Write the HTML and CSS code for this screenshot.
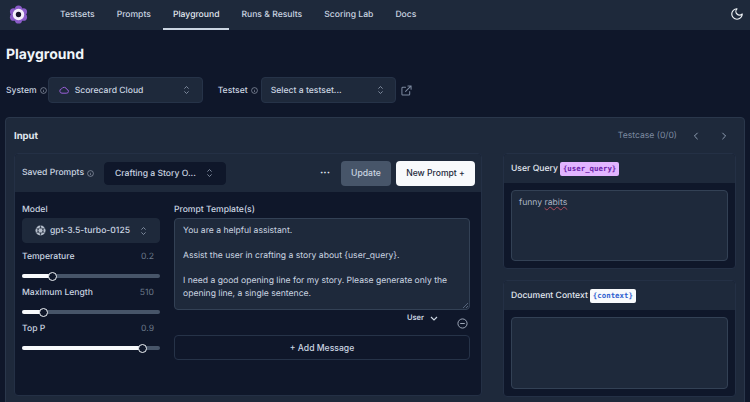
FILE: index.html
```html
<!DOCTYPE html>
<html lang="en">
<head>
  <meta charset="UTF-8" />
  <title>Playground</title>
  <link rel="stylesheet" href="styles.css">
</head>
<body>
  <nav class="topnav">
    <svg class="logo" width="19" height="19" viewBox="0 0 20 20">
      <g fill="#8b5cc9">
        <circle cx="10" cy="4.2" r="3.8"/>
        <circle cx="15.2" cy="7.2" r="3.8"/>
        <circle cx="15.2" cy="12.8" r="3.8"/>
        <circle cx="10" cy="15.8" r="3.8"/>
        <circle cx="4.8" cy="12.8" r="3.8"/>
        <circle cx="4.8" cy="7.2" r="3.8"/>
      </g>
      <circle cx="10" cy="10" r="6" fill="#f4eefb"/>
      <circle cx="10" cy="10" r="2.8" fill="#17132b"/>
    </svg>
    <a class="nav-link">Testsets</a>
    <a class="nav-link">Prompts</a>
    <a class="nav-link active">Playground</a>
    <a class="nav-link">Runs &amp; Results</a>
    <a class="nav-link">Scoring Lab</a>
    <a class="nav-link">Docs</a>
    <svg class="moon" width="14" height="14" viewBox="0 0 24 24" fill="none" stroke="#f1f5f9" stroke-width="2" stroke-linecap="round" stroke-linejoin="round">
      <path d="M12 3a6 6 0 0 0 9 9 9 9 0 1 1-9-9Z"/>
    </svg>
  </nav>

  <h1>Playground</h1>

  <div class="selectors">
    <span class="label">System</span>
    <svg class="info" viewBox="0 0 12 12"><circle cx="6" cy="6" r="5"/><path d="M6 5.5v3M6 3.4v.4"/></svg>
    <div class="select system-select">
      <svg class="cloud" width="10" height="8" viewBox="0 0 24 20" fill="none" stroke="#9a5fd8" stroke-width="2.5" stroke-linejoin="round">
        <path d="M17.5 18H7a5.5 5.5 0 0 1-1-10.9A7 7 0 0 1 19 8.5a4.8 4.8 0 0 1-1.5 9.5Z"/>
      </svg>
      <span class="select-text">Scorecard Cloud</span>
      <svg class="updown" viewBox="0 0 10 14"><path d="M2 5l3-3 3 3M2 9l3 3 3-3"/></svg>
    </div>
    <span class="label testset-label">Testset</span>
    <svg class="info" viewBox="0 0 12 12"><circle cx="6" cy="6" r="5"/><path d="M6 5.5v3M6 3.4v.4"/></svg>
    <div class="select testset-select">
      <span class="select-text">Select a testset...</span>
      <svg class="updown" viewBox="0 0 10 14"><path d="M2 5l3-3 3 3M2 9l3 3 3-3"/></svg>
    </div>
    <svg class="external" width="11" height="11" viewBox="0 0 24 24" fill="none" stroke="#7d8aa0" stroke-width="2.2" stroke-linecap="round" stroke-linejoin="round">
      <path d="M19 14v6a2 2 0 0 1-2 2H4a2 2 0 0 1-2-2V7a2 2 0 0 1 2-2h6M15 2h7v7M10 14L22 2"/>
    </svg>
  </div>

  <section class="panel">
    <div class="panel-head">
      <h2>Input</h2>
      <div class="testcase">
        <span>Testcase (0/0)</span>
        <svg class="pager first" viewBox="0 0 10 12"><path d="M7 2L3 6l4 4"/></svg>
        <svg class="pager" viewBox="0 0 10 12"><path d="M3 2l4 4-4 4"/></svg>
      </div>
    </div>

    <div class="panel-grid">
      <div class="card prompt-card">
        <div class="card-head prompt-head">
          <span class="label">Saved Prompts</span>
          <svg class="info" viewBox="0 0 12 12"><circle cx="6" cy="6" r="5"/><path d="M6 5.5v3M6 3.4v.4"/></svg>
          <div class="select saved-select">
            <span class="select-text">Crafting a Story O...</span>
            <svg class="updown" viewBox="0 0 10 14"><path d="M2 5l3-3 3 3M2 9l3 3 3-3"/></svg>
          </div>
          <span class="dots">&middot;&middot;&middot;</span>
          <button class="btn btn-update">Update</button>
          <button class="btn btn-new">New Prompt +</button>
        </div>

        <div class="prompt-body">
          <div class="settings">
            <div class="label field-label">Model</div>
            <div class="select model-select">
              <svg class="openai" width="11" height="11" viewBox="0 0 24 24" fill="#b4bdca">
                <circle cx="12" cy="12" r="11"/>
                <g fill="none" stroke="#1e293b" stroke-width="1.5">
                  <path d="M12 5.5l5.6 3.25v6.5L12 18.5l-5.6-3.25v-6.5z"/>
                  <path d="M12 1v7M21.5 6.5l-6 3.5M21.5 17.5l-6-3.5M12 23v-7M2.5 17.5l6-3.5M2.5 6.5l6 3.5"/>
                </g>
              </svg>
              <span class="select-text">gpt-3.5-turbo-0125</span>
              <svg class="updown" viewBox="0 0 10 14"><path d="M2 5l3-3 3 3M2 9l3 3 3-3"/></svg>
            </div>

            <div class="slider-row first-row"><span class="label">Temperature</span><span class="value">0.2</span></div>
            <div class="slider"><div class="fill" style="width: 30px"></div><div class="thumb"></div></div>

            <div class="slider-row"><span class="label">Maximum Length</span><span class="value">510</span></div>
            <div class="slider"><div class="fill" style="width: 21px"></div><div class="thumb"></div></div>

            <div class="slider-row"><span class="label">Top P</span><span class="value">0.9</span></div>
            <div class="slider"><div class="fill" style="width: 120px"></div><div class="thumb"></div></div>
          </div>

          <div class="template">
            <div class="label field-label">Prompt Template(s)</div>
            <div class="textbox template-box">
              <p>You are a helpful assistant.</p>
              <p>Assist the user in crafting a story about {user_query}.</p>
              <p>I need a good opening line for my story. Please generate only the opening line, a single sentence.</p>
              <svg class="grip" width="6" height="6" viewBox="0 0 6 6"><path d="M1 6l5-5M4 6l2-2"/></svg>
            </div>
            <div class="role-row">
              <span class="role">User</span>
              <svg class="chevron" width="8" height="6" viewBox="0 0 8 6"><path d="M1 1l3 3 3-3"/></svg>
              <svg class="minus" width="11" height="11" viewBox="0 0 12 12"><circle cx="6" cy="6" r="5"/><path d="M3.5 6h5"/></svg>
            </div>
            <button class="add-message">+ Add Message</button>
          </div>
        </div>
      </div>

      <div class="side">
        <div class="card">
          <div class="card-head side-head">
            <span class="side-title">User Query</span>
            <span class="tag tag-purple">{user_query}</span>
          </div>
          <div class="side-body">
            <div class="textbox side-box first-box">funny <span class="misspelled">rabits</span></div>
          </div>
        </div>
        <div class="card">
          <div class="card-head side-head">
            <span class="side-title">Document Context</span>
            <span class="tag tag-white">{context}</span>
          </div>
          <div class="side-body">
            <div class="textbox side-box"></div>
          </div>
        </div>
      </div>
    </div>
  </section>
</body>
</html>
```

FILE: styles.css
```css
html, body {
  height: 402px;
  overflow: hidden;
}

body {
  font-family: Inter, "Noto Sans", sans-serif;
  font-size: 8.6px;
  text-rendering: geometricPrecision;
  background-color: #0f172a;
  color: #cbd5e1;
  margin: 0;
}

.topnav {
  display: flex;
  align-items: center;
  gap: 2px;
  height: 30px;
  background-color: #1e293b;
  padding-left: 9px;
}

.logo {
  margin: 0 20px 2px 0;
  flex: none;
}

.nav-link {
  display: flex;
  align-items: center;
  height: 30px;
  box-sizing: border-box;
  padding: 1px 10px 0;
  font-size: 8.6px;
  font-weight: 500;
  color: #cbd5e1;
  border-bottom: 2px solid transparent;
}

.nav-link.active {
  color: #e2e8f0;
  border-bottom-color: #cbd5e1;
}

.moon {
  margin: 0 6px 2px auto;
}

h1 {
  font-size: 14px;
  font-weight: 700;
  color: #f1f5f9;
  margin: 15px 0 0 6px;
  line-height: 19px;
}

.selectors {
  display: flex;
  align-items: center;
  margin: 13px 0 0 6px;
  height: 26px;
}

.selectors .label {
  padding-top: 1px;
}

.label {
  color: #cbd5e1;
  font-size: 8.6px;
  font-weight: 500;
}

.info {
  width: 7px;
  height: 7px;
  margin-left: 3px;
  flex: none;
  fill: none;
  stroke: #aab4c4;
  stroke-width: 1;
}

.select {
  display: flex;
  align-items: center;
  box-sizing: border-box;
  background-color: #1e293b;
  border: 1px solid #263348;
  border-radius: 4px;
  height: 26px;
  color: #cbd5e1;
  font-weight: 500;
}

.select-text {
  flex: 1;
  white-space: nowrap;
  padding-top: 1px;
}

.updown {
  width: 7px;
  height: 10px;
  flex: none;
  fill: none;
  stroke: #8f9bae;
  stroke-width: 1.2;
}

.system-select {
  width: 155px;
  margin-left: 1px;
  padding: 0 12px 0 10px;
}

.cloud {
  margin-right: 6px;
}

.testset-label {
  margin-left: 15px;
}

.testset-select {
  width: 135px;
  margin-left: 3px;
  padding: 0 11px 0 9px;
}

.external {
  margin-left: 5px;
}

.panel {
  margin: 14px 5px 0 5px;
  height: 320px;
  box-sizing: border-box;
  background-color: #1e293b;
  border: 1px solid #2a374b;
  border-radius: 4px;
  padding: 0 8px;
}

.panel-head {
  display: flex;
  align-items: center;
  justify-content: space-between;
  height: 35px;
}

h2 {
  font-size: 9.5px;
  font-weight: 700;
  color: #e2e8f0;
  margin: 2px 0 0;
}

.testcase {
  display: flex;
  align-items: center;
  color: #7d8aa0;
  font-size: 8.6px;
  margin-right: 8px;
}

.pager {
  width: 8px;
  height: 10px;
  margin-left: 20px;
  fill: none;
  stroke: #94a3b8;
  stroke-width: 1.2;
}

.pager.first {
  margin-left: 15px;
}

.panel-grid {
  display: grid;
  grid-template-columns: 468px 233px;
  gap: 21px;
}

.card {
  display: flex;
  flex-direction: column;
  background-color: #0f172a;
  border: 1px solid #243045;
  border-radius: 4px;
  box-sizing: border-box;
  overflow: hidden;
}

.card-head {
  display: flex;
  align-items: center;
  background-color: #1e293b;
  box-sizing: border-box;
}

.prompt-card {
  height: 243px;
}

.prompt-head {
  height: 38px;
  padding: 0 6px 0 7px;
}

.saved-select {
  width: 122px;
  height: 23px;
  margin-left: 10px;
  padding: 0 12px 0 10px;
  background-color: #0f172a;
  border-color: #0f172a;
}

.dots {
  margin-left: auto;
  color: #e2e8f0;
  font-weight: 700;
  font-size: 10px;
}

.btn {
  height: 25px;
  border: none;
  border-radius: 4px;
  font-family: inherit;
  font-size: 8.6px;
  font-weight: 500;
  padding: 0;
}

.btn-update {
  width: 50px;
  margin-left: 11px;
  background-color: #475569;
  color: #cbd5e1;
}

.btn-new {
  width: 79px;
  margin-left: 5px;
  background-color: #f8fafc;
  color: #1e293b;
}

.prompt-body {
  display: flex;
  flex: 1;
  padding: 10px 11px 0 7px;
}

.settings {
  width: 138px;
  flex: none;
}

.field-label {
  line-height: 16px;
}

.model-select {
  height: 25px;
  padding: 0 12px;
  background-color: #1e293b;
  border-color: #1e293b;
}

.openai {
  margin-right: 4px;
  flex: none;
}

.slider-row {
  display: flex;
  justify-content: space-between;
  align-items: center;
  box-sizing: border-box;
  height: 14px;
  padding-top: 2px;
  margin-top: 4px;
}

.first-row {
  margin-top: 6px;
}

.value {
  color: #6b7789;
  padding-right: 6px;
}

.slider {
  display: flex;
  align-items: center;
  height: 10px;
  margin-top: 8px;
  position: relative;
}

.slider::before {
  content: "";
  position: absolute;
  left: 0;
  right: 0;
  top: 3px;
  height: 4px;
  border-radius: 2px;
  background-color: #475569;
}

.fill {
  height: 4px;
  border-radius: 2px 0 0 2px;
  background-color: #f8fafc;
  position: relative;
}

.thumb {
  width: 9px;
  height: 9px;
  box-sizing: border-box;
  border-radius: 50%;
  background-color: #0f172a;
  border: 1.5px solid #f1f5f9;
  margin-left: -4px;
  position: relative;
}

.template {
  flex: 1;
  margin-left: 14px;
}

.textbox {
  box-sizing: border-box;
  background-color: #1e293b;
  border: 1px solid #334155;
  border-radius: 4px;
  color: #cbd5e1;
  font-size: 8.6px;
  line-height: 12.5px;
}

.template-box {
  height: 92px;
  padding: 6px 8px 4px;
  position: relative;
}

.template-box p {
  margin: 0 0 12.5px;
}

.grip {
  position: absolute;
  right: 1px;
  bottom: 1px;
  fill: none;
  stroke: #64748b;
  stroke-width: 0.8;
}

.role-row {
  display: flex;
  align-items: flex-start;
  justify-content: flex-end;
  height: 25px;
  padding-right: 2px;
}

.role {
  font-size: 7.5px;
  font-weight: 600;
  color: #cbd5e1;
  margin-top: 3px;
}

.chevron {
  margin: 6px 0 0 6px;
  fill: none;
  stroke: #cbd5e1;
  stroke-width: 1.2;
}

.minus {
  margin: 8px 0 0 19px;
  fill: none;
  stroke: #aab4c4;
  stroke-width: 1;
}

.add-message {
  display: block;
  width: 100%;
  height: 25px;
  background: none;
  border: 1px solid #263348;
  border-radius: 4px;
  font-family: inherit;
  font-size: 8.6px;
  font-weight: 500;
  color: #cbd5e1;
}

.side {
  display: flex;
  flex-direction: column;
  gap: 11px;
}

.side-head {
  height: 29px;
  padding: 0 7px;
}

.side-title {
  font-size: 8.6px;
  font-weight: 500;
  color: #e2e8f0;
}

.tag {
  font-family: "DejaVu Sans Mono", "Liberation Mono", monospace;
  font-size: 7.4px;
  font-weight: 700;
  line-height: 14px;
  border-radius: 2px;
  padding: 0 3px;
  margin-left: 2px;
}

.tag-purple {
  background-color: #e2b4ff;
  color: #6b21a8;
}

.tag-white {
  background-color: #f8fafc;
  color: #2f5fd0;
}

.side-body {
  padding: 7px;
}

.side-box {
  height: 72px;
  padding: 6px 7px;
  color: #aab4c4;
}

.first-box {
  height: 71px;
}

.misspelled {
  text-decoration: underline wavy #b04a5a 0.5px;
}
```
